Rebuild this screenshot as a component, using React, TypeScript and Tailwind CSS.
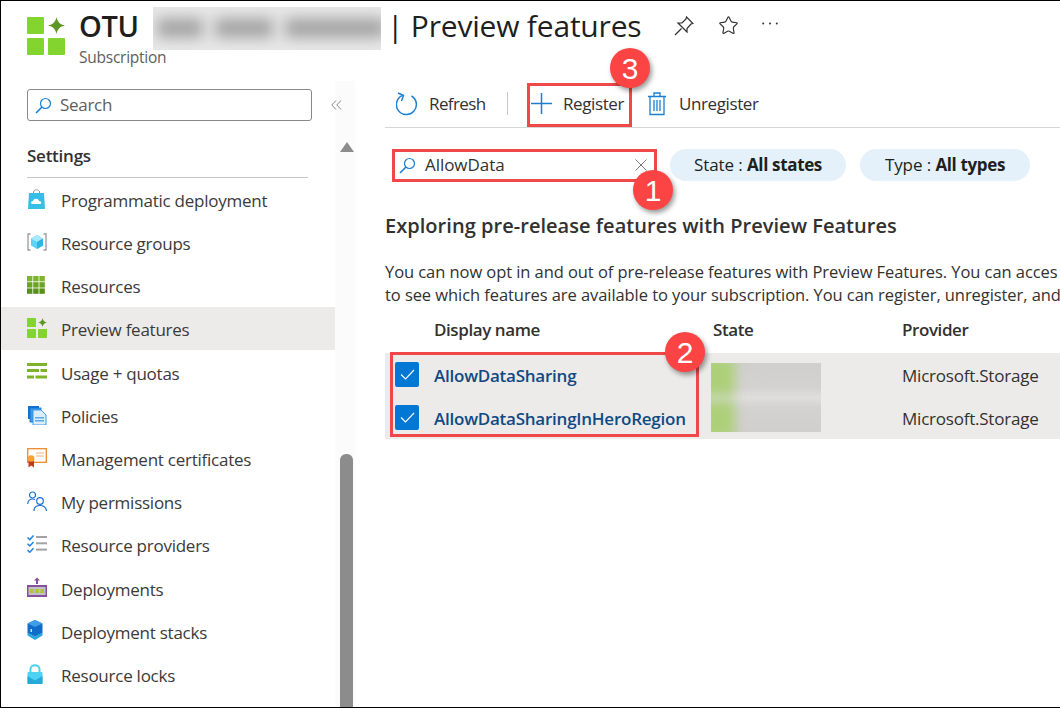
import { Star } from "lucide-react";

const font = "font-['Open_Sans','Noto_Sans',sans-serif]";

function PreviewIcon({ size }: { size: number }) {
  return (
    <svg width={size} height={size} viewBox="0 0 38 38">
      <rect x="0" y="0" width="17" height="17" rx="1" fill="#83d42f" />
      <rect x="0" y="21" width="17" height="17" rx="1" fill="#83d42f" />
      <rect x="21" y="21" width="17" height="17" rx="1" fill="#83d42f" />
      <path d="M29.5 0 C30.5 5 33 7.5 38 8.5 C33 9.5 30.5 12 29.5 17 C28.5 12 26 9.5 21 8.5 C26 7.5 28.5 5 29.5 0Z" fill="#5e9624" />
    </svg>
  );
}

function SearchIcon({ className }: { className?: string }) {
  return (
    <svg className={className} width="17" height="17" viewBox="0 0 17 17" fill="none" stroke="#1b7fd1" strokeWidth="1.2">
      <circle cx="10.5" cy="6.5" r="5" />
      <path d="M7 10 L1 16" strokeWidth="1.6" />
    </svg>
  );
}

function BagIcon() {
  return (
    <svg width="20" height="20" viewBox="0 0 20 20">
      <path d="M6.5 6 V3 C6.5 0 12.5 0 12.5 3 V6" fill="none" stroke="#9a9a9a" strokeWidth="1" />
      <path d="M2 4 H17 L18 20 H1Z" fill="#36bfe6" />
      <path d="M5.5 15 C3.5 15 3.5 12 6 12 C6.5 9 11.5 9 12 12 C14.5 11.5 15 15 13 15Z" fill="#fff" />
    </svg>
  );
}

function GroupIcon() {
  return (
    <svg width="20" height="20" viewBox="0 0 20 20">
      <path d="M3.5 2 H1 V18 H3.5 M16.5 2 H19 V18 H16.5" fill="none" stroke="#9b9b9b" strokeWidth="1.3" />
      <path d="M10 3 L16 6.5 V13.5 L10 17 L4 13.5 V6.5Z" fill="#5fd3f5" />
      <path d="M10 3 L16 6.5 L10 10 L4 6.5Z" fill="#a5e9fb" />
      <path d="M10 10 L16 6.5 V13.5 L10 17Z" fill="#2fb4e4" />
    </svg>
  );
}

function GridIcon() {
  return (
    <svg width="18" height="18" viewBox="0 0 18 18">
      {[0, 6.2, 12.4].map((y, r) =>
        [0, 6.2, 12.4].map((x) => (
          <rect key={`${x}-${y}`} x={x} y={y} width="5.4" height="5.4" fill={["#7fb52d", "#6aa420", "#578f17"][r]} />
        ))
      )}
    </svg>
  );
}

function QuotaIcon() {
  return (
    <svg width="20" height="16" viewBox="0 0 20 16">
      <rect x="0" y="0" width="20" height="3" fill="#7fb32c" />
      <rect x="0" y="6" width="12" height="3" fill="#7fb32c" />
      <rect x="13.5" y="6" width="6.5" height="3" fill="#7fb32c" />
      <rect x="0" y="12.5" width="7" height="3" fill="#7fb32c" />
      <rect x="8.5" y="12.5" width="11.5" height="3" fill="#7fb32c" />
    </svg>
  );
}

function PolicyIcon() {
  return (
    <svg width="20" height="20" viewBox="0 0 20 20">
      <rect x="1" y="1" width="11" height="13" fill="#0f72d1" />
      <rect x="3" y="3" width="11" height="14" fill="#3f98e8" stroke="#0f72d1" strokeWidth="0.8" />
      <path d="M6 5 H14 L19 10 V20 H6Z" fill="#dcecfb" stroke="#3f98e8" strokeWidth="1" />
      <rect x="8" y="12" width="9" height="1.5" fill="#5aa7ea" />
      <rect x="8" y="15" width="9" height="1.5" fill="#5aa7ea" />
    </svg>
  );
}

function CertIcon() {
  return (
    <svg width="20" height="20" viewBox="0 0 20 20">
      <rect x="0.7" y="0.7" width="18.6" height="13.6" fill="#fff" stroke="#f0892c" strokeWidth="1.3" />
      <path d="M9 5 H17 M9 8 H17" stroke="#f5b27c" strokeWidth="1" />
      <path d="M1.5 12 H7 V19.5 L4.2 17.5 L1.5 19.5Z" fill="#c23a1e" />
      <circle cx="4.2" cy="10.5" r="3.3" fill="#f6a13a" />
    </svg>
  );
}

function PeopleIcon() {
  return (
    <svg width="20" height="20" viewBox="0 0 20 20" fill="none" stroke="#1b6fd6" strokeWidth="1.2">
      <circle cx="5.5" cy="4" r="3" />
      <path d="M0.7 13 C1 9.5 3 8 5.5 8 C6.5 8 7.3 8.2 8 8.6" />
      <circle cx="13" cy="10" r="3.3" />
      <path d="M7 20 C7 16 9.5 14.5 13 14.5 C16.5 14.5 19 16 19.5 20" />
    </svg>
  );
}

function ProvidersIcon() {
  return (
    <svg width="20" height="18" viewBox="0 0 20 18" fill="none">
      {[0, 6.3, 12.6].map((y) => (
        <g key={y}>
          <path d={`M0.5 ${y + 2.5} L2.8 ${y + 4.6} L6.5 ${y + 0.6}`} stroke="#1f86e0" strokeWidth="1.5" />
          <rect x="9" y={y + 1} width="11" height="2" fill="#a3a3a3" />
        </g>
      ))}
    </svg>
  );
}

function DeployIcon() {
  return (
    <svg width="20" height="20" viewBox="0 0 20 20">
      <path d="M10 0.5 L13 3.5 H11 V7 H9 V3.5 H7Z" fill="#8a4d9d" />
      <rect x="0" y="8" width="20" height="12" fill="#86509b" />
      <rect x="1.5" y="10" width="17" height="8" fill="#c3bfc9" />
      <rect x="3" y="12" width="3.5" height="4" fill="#b0c530" />
      <rect x="8.2" y="12" width="3.5" height="4" fill="#b0c530" />
      <rect x="13.4" y="12" width="3.5" height="4" fill="#b0c530" />
    </svg>
  );
}

function StackIcon() {
  return (
    <svg width="16" height="20" viewBox="0 0 16 20">
      <path d="M0.5 12 L8 16.5 L15.5 12 V15.5 L8 20 L0.5 15.5Z" fill="#2aa7df" />
      <path d="M8 0 L15.5 3.5 V12.5 L8 16.5 L0.5 12.5 V3.5Z" fill="#0f6cc9" />
      <path d="M8 0 L15.5 3.5 L8 7 L0.5 3.5Z" fill="#3f9ee8" />
      <rect x="3.6" y="9" width="1.2" height="3" fill="#fff" />
    </svg>
  );
}

function LockIcon() {
  return (
    <svg width="16" height="20" viewBox="0 0 16 20">
      <path d="M3.5 9 V5 C3.5 0 12.5 0 12.5 5 V9" fill="none" stroke="#4bd0f2" strokeWidth="2" />
      <rect x="0.5" y="8" width="15" height="12" rx="1" fill="#4ed2f3" />
      <path d="M0.5 12 L8 16.5 L15.5 12 V19 C15.5 19.6 15 20 14.5 20 H1.5 C1 20 0.5 19.6 0.5 19Z" fill="#25a9d6" />
    </svg>
  );
}

const menu = [
  { label: "Programmatic deployment", icon: <BagIcon /> },
  { label: "Resource groups", icon: <GroupIcon /> },
  { label: "Resources", icon: <GridIcon /> },
  { label: "Preview features", icon: <PreviewIcon size={20} />, active: true },
  { label: "Usage + quotas", icon: <QuotaIcon /> },
  { label: "Policies", icon: <PolicyIcon /> },
  { label: "Management certificates", icon: <CertIcon /> },
  { label: "My permissions", icon: <PeopleIcon /> },
  { label: "Resource providers", icon: <ProvidersIcon /> },
  { label: "Deployments", icon: <DeployIcon /> },
  { label: "Deployment stacks", icon: <StackIcon /> },
  { label: "Resource locks", icon: <LockIcon /> },
];

function Sidebar() {
  return (
    <aside className="w-[354px] shrink-0 flex">
      <div className="w-[334px] shrink-0">
        <div className="flex items-center pl-[26px] pt-[8px]">
          <div className="w-[285px] shrink-0 h-[32px] border border-[#8a8886] rounded-[3px] flex items-center pl-[7px] gap-[8px]">
            <SearchIcon />
            <span className="text-[17px] tracking-[-0.3px] text-[#605e5c]">Search</span>
          </div>
          <svg className="ml-[19px] shrink-0 relative z-10" width="11" height="10" viewBox="0 0 11 10" fill="none" stroke="#8a8886" strokeWidth="1">
            <path d="M5 0.5 L0.8 5 L5 9.5 M10 0.5 L5.8 5 L10 9.5" />
          </svg>
        </div>
        <div className="ml-[26px] mr-[27px] mt-[21px] h-[36px] border-b border-[#c8c6c4] text-[17px] tracking-[-0.25px] font-semibold text-[#323130] leading-[28px]">
          Settings
        </div>
        <ul className="-mt-[1px]">
          {menu.map((m) => (
            <li
              key={m.label}
              className={`h-[43.2px] flex items-center pl-[26px] text-[17px] tracking-[-0.25px] text-[#3b3a39] ${m.active ? "bg-[#edebe9]" : ""}`}
            >
              <span className="w-[34px] flex items-center">{m.icon}</span>
              <span className="pt-[4px]">{m.label}</span>
            </li>
          ))}
        </ul>
      </div>
      {/* scrollbar */}
      <div className="flex-1 bg-[#fbfbfb] flex flex-col items-start pl-[5px]">
        <div className="mt-[61px] w-0 h-0 border-l-[7px] border-r-[7px] border-b-[10px] border-l-transparent border-r-transparent border-b-[#8c8c8c]" />
        <div className="mt-auto w-[13px] h-[253px] rounded-t-[6px] bg-[#8c8c8c]" />
      </div>
    </aside>
  );
}

function Toolbar() {
  return (
    <div className="h-[47px] border-b border-[#d6d6d6] flex items-center text-[17px] tracking-[-0.4px] text-[#323130] pl-[11px] pb-[1px]">
      <svg width="22" height="24" viewBox="0 0 22 24" fill="none" stroke="#1b7fd1" strokeWidth="1.5">
        <path d="M15.5 4 A10 10 0 1 1 6 3.6" />
        <path d="M2 1 L7.5 3.5 L5.5 9" />
      </svg>
      <span className="ml-[11px] w-[57px] tracking-[-0.6px]">Refresh</span>
      <span className="ml-[21px] h-[23px] w-px bg-[#c8c6c4]" />
      <svg className="ml-[23px]" width="21" height="21" viewBox="0 0 21 21" stroke="#1b7fd1" strokeWidth="1.5">
        <path d="M10.5 0 V21 M0 10.5 H21" />
      </svg>
      <span className="ml-[11px]">Register</span>
      <svg className="ml-[24px]" width="18" height="24" viewBox="0 0 18 24" fill="none" stroke="#1b7fd1" strokeWidth="1.3">
        <path d="M0 4.5 H18 M6 4.5 V1 H12 V4.5" />
        <path d="M2 4.5 V22.5 H16 V4.5" />
        <path d="M6 8 V19 M9 8 V19 M12 8 V19" />
      </svg>
      <span className="ml-[13px]">Unregister</span>
    </div>
  );
}

function Pill({ label, value, className }: { label: string; value: string; className: string }) {
  return (
    <div className={`h-[32px] rounded-full bg-[#e5f1fa] flex items-center justify-center text-[17px] tracking-[-0.1px] text-[#201f1e] ${className}`}>
      {label}&nbsp;:&nbsp;<b className="font-bold tracking-[-0.35px]">{value}</b>
    </div>
  );
}

function BlurBlock() {
  return (
    <div className="w-[110px] h-[69px] overflow-hidden bg-[linear-gradient(180deg,#d0cfce_0,#d3d2d1_35%,#dfdedd_50%,#d3d2d1_65%,#d0cfce_100%)]">
      <div className="-ml-[10px] -mt-[6px] flex flex-col gap-[6px] blur-[6px]">
        <div className="w-[34px] h-[38px] bg-[#acd078]" />
        <div className="w-[34px] h-[38px] bg-[#acd078]" />
      </div>
    </div>
  );
}

function Row({ name }: { name: string }) {
  return (
    <div className="h-[43px] flex items-center pl-[10px] text-[17px]">
      <span className="w-[24px] h-[25px] rounded-[2px] bg-[#0078d4] flex items-center justify-center">
        <svg width="15" height="11" viewBox="0 0 15 11" fill="none" stroke="#fff" strokeWidth="1.1">
          <path d="M1 5.5 L5.5 10 L14 1" />
        </svg>
      </span>
      <span className="ml-[15px] w-[468px] pt-[2px] font-semibold tracking-[-0.24px] text-[#0f4a85]">{name}</span>
      <span className="pt-[2px] tracking-[-0.22px] text-[#323130]">Microsoft.Storage</span>
    </div>
  );
}

function Main() {
  return (
    <main className="flex-1 min-w-0 pl-[30px] overflow-hidden">
      <Toolbar />
      <div className="flex items-center pl-[7px] mt-[21px] gap-[14px]">
        <div className="w-[264px] h-[32px] flex items-center pl-[7px] pr-[9px]">
          <SearchIcon />
          <span className="ml-[9px] text-[17px] tracking-[-0.05px] text-[#323130]">AllowData</span>
          <svg className="ml-auto" width="12" height="12" viewBox="0 0 12 12" stroke="#7a7a7a" strokeWidth="1">
            <path d="M0.5 0.5 L11.5 11.5 M11.5 0.5 L0.5 11.5" />
          </svg>
        </div>
        <Pill label="State" value="All states" className="w-[176px]" />
        <Pill label="Type" value="All types" className="w-[170px]" />
      </div>
      <h2 className="mt-[30px] text-[20px] font-semibold tracking-[0.04px] text-[#323130] leading-[30px]">
        Exploring pre-release features with Preview Features
      </h2>
      <p className="mt-[19px] text-[16.5px] tracking-[-0.07px] leading-[23px] text-[#323130] whitespace-nowrap">
        You can now opt in and out of pre-release features with Preview Features. You can acces
        <br />
        to see which features are available to your subscription. You can register, unregister, and
      </p>
      <div className="mt-[9px] h-[38px] flex items-center text-[17px] font-semibold tracking-[-0.42px] text-[#323130] pl-[49px] pb-[9px]">
        <span className="w-[279px]">Display name</span>
        <span className="w-[189px]">State</span>
        <span>Provider</span>
      </div>
      <div className="relative bg-[#edebe9] h-[86px]">
        <Row name="AllowDataSharing" />
        <Row name="AllowDataSharingInHeroRegion" />
        <div className="absolute left-[326px] top-[10px]">
          <BlurBlock />
        </div>
      </div>
    </main>
  );
}

function Badge({ n, className }: { n: number; className: string }) {
  return (
    <div className={`absolute w-[40px] h-[40px] rounded-full bg-[#fc4444] shadow-[2px_3px_5px_rgba(0,0,0,0.4)] text-white text-[30px] font-['Liberation_Sans',sans-serif] flex items-center justify-center ${className}`}>
      {n}
    </div>
  );
}

export default function App() {
  return (
    <div className={`${font} relative w-[1060px] h-[708px] overflow-hidden bg-white border-t border-b border-l border-black flex flex-col`}>
      <header className="h-[80px] shrink-0 flex pl-[26px] pt-[16px]">
        <PreviewIcon size={38} />
        <div className="ml-[14px] -mt-[12px]">
          <div className="flex items-center h-[41px] text-[#201f1e]">
            <span className="text-[29px] font-semibold tracking-[-0.4px] w-[74px]">OTU</span>
            <div className="w-[228px] h-[43px] mt-[5px] overflow-hidden bg-[#e8e8e8] flex gap-[12px] pl-[4px] pt-[11px]">
              <div className="w-[46px] h-[20px] shrink-0 bg-[#a6a6a6] blur-[7px]" />
              <div className="w-[58px] h-[20px] shrink-0 bg-[#a6a6a6] blur-[7px]" />
              <div className="w-[100px] h-[20px] shrink-0 bg-[#a6a6a6] blur-[7px]" />
            </div>
            <span className="ml-[6px] text-[30px] tracking-[-0.2px]">| Preview features</span>
            <svg className="ml-[33px]" width="20" height="20" viewBox="0 0 20 20" fill="none" stroke="#323130" strokeWidth="1.2">
              <path d="M12.5 1 L19 7.5 L17 8 L13 12.5 L13 16 L4 7 L8 7 L12 3Z" />
              <path d="M7.5 12.5 L1 19" />
            </svg>
            <Star className="ml-[24px]" size={21} strokeWidth={1.3} color="#323130" />
            <svg className="ml-[23px] mb-[5px]" width="16" height="3" viewBox="0 0 16 3" fill="#323130">
              <circle cx="1.2" cy="1.5" r="1" />
              <circle cx="8" cy="1.5" r="1" />
              <circle cx="14.8" cy="1.5" r="1" />
            </svg>
          </div>
          <div className="text-[15.5px] leading-[22px] tracking-[-0.25px] text-[#605e5c]">Subscription</div>
        </div>
      </header>
      <div className="flex flex-1 min-h-0">
        <Sidebar />
        <Main />
      </div>

      {/* annotations */}
      <div className="absolute left-[526px] top-[82px] w-[105px] h-[44px] border-[3px] border-[#f04848]" />
      <div className="absolute left-[391px] top-[148px] w-[265px] h-[33px] border-[3px] border-[#f04848]" />
      <div className="absolute left-[389px] top-[351px] w-[309px] h-[85px] border-[3px] border-[#f04848]" />
      <Badge n={3} className="left-[609px] top-[47px]" />
      <Badge n={1} className="left-[632px] top-[169px]" />
      <Badge n={2} className="left-[664px] top-[331px]" />
    </div>
  );
}
